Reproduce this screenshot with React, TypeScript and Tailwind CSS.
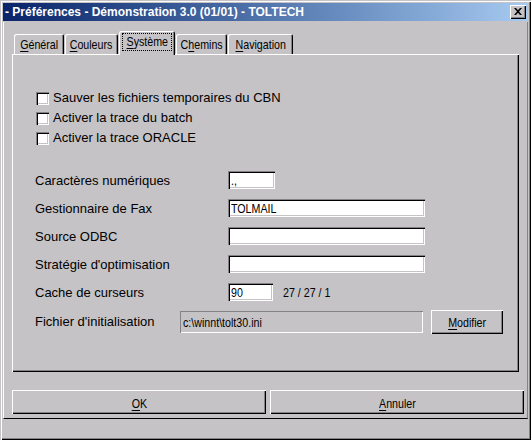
import React from "react";

const raised =
  "shadow-[inset_1px_1px_0_#ffffff,inset_-1px_-1px_0_#000000,inset_-2px_-2px_0_#848284]";
const sunken =
  "shadow-[inset_1px_1px_0_#848284,inset_2px_2px_0_#000000,inset_-1px_-1px_0_#ffffff,inset_-2px_-2px_0_#c6c3c6]";

function N({ children, left }: { children: React.ReactNode; left?: boolean }) {
  return (
    <span
      className={`inline-block whitespace-nowrap scale-x-[0.82] ${left ? "origin-left" : "origin-center"}`}
    >
      {children}
    </span>
  );
}

function Tab({
  label,
  u,
  w,
  selected,
}: {
  label: string;
  u: number;
  w: number;
  selected?: boolean;
}) {
  const before = label.slice(0, u);
  const ch = label.slice(u, u + 1);
  const after = label.slice(u + 1);
  const text = (
    <N>
      {before}
      <u className="underline-offset-[2px]">{ch}</u>
      {after}
    </N>
  );
  if (selected) {
    return (
      <div
        className="relative z-10 -mb-px flex h-[24px] items-start justify-center bg-[#c6c3c6] pt-[2px] rounded-tl-[2px] rounded-tr-[2px] shadow-[inset_1px_1px_0_#ffffff,inset_-1px_0_0_#000000,inset_-2px_0_0_#848284]"
        style={{ width: w }}
      >
        <span className="flex w-[50px] justify-center border border-dotted border-black leading-[16px]">
          {text}
        </span>
      </div>
    );
  }
  return (
    <div
      className="flex h-[20px] items-start justify-center pt-[3px] leading-[15px] rounded-tl-[2px] rounded-tr-[2px] shadow-[inset_1px_1px_0_#ffffff,inset_-1px_0_0_#000000,inset_-2px_0_0_#848284]"
      style={{ width: w }}
    >
      {text}
    </div>
  );
}

function Check({ label }: { label: string }) {
  return (
    <div className="flex h-[20px] items-center">
      <div className={`ml-[1px] h-[13px] w-[13px] bg-white ${sunken}`} />
      <span className="ml-[4px]">{label}</span>
    </div>
  );
}

function Field({ w, value }: { w: number; value?: string }) {
  return (
    <div
      className={`flex h-[18px] items-center overflow-hidden bg-white pl-[3px] pt-[1px] text-[13px] text-black ${sunken}`}
      style={{ width: w }}
    >
      {value ? <N left>{value}</N> : null}
    </div>
  );
}

function Row({ label, children }: { label: string; children?: React.ReactNode }) {
  return (
    <div className="flex h-[28px] items-center">
      <div className="w-[193px] shrink-0 pt-[2px]">{label}</div>
      {children}
    </div>
  );
}

export default function App() {
  return (
    <div
      className="flex h-[440px] w-[531px] flex-col bg-[#c6c3c6] p-[3px] text-black shadow-[inset_1px_1px_0_#c6c3c6,inset_2px_2px_0_#ffffff,inset_-1px_-1px_0_#000000,inset_-2px_-2px_0_#848284] font-['Liberation_Sans',Arial,sans-serif] text-[13px]"
    >
      {/* Title bar */}
      <div className="flex h-[18px] shrink-0 items-center justify-between bg-gradient-to-r from-[#0a246a] to-[#a6caf0] pl-[2px] pr-[2px]">
        <span className="text-[12px] font-bold leading-none text-white whitespace-nowrap">
          - Préférences - Démonstration 3.0 (01/01) - TOLTECH
        </span>
        <div className={`flex h-[14px] w-[16px] items-center justify-center bg-[#c6c3c6] ${raised}`}>
          <svg width="8" height="7" viewBox="0 0 8 7" className="-mt-px -ml-px">
            <path d="M0 0h2l2 2.3L6 0h2L5 3.5 8 7H6L4 4.7 2 7H0l3-3.5z" fill="#000" />
          </svg>
        </div>
      </div>

      {/* Frame */}
      <div className="mt-[1px] flex h-[397px] w-[525px] shrink-0 flex-col border-l border-b border-r border-l-white border-b-[#000000] border-r-[#848284] pl-[8px] pt-[10px]">
        {/* Tabs */}
        <div className="flex h-[22px] items-end gap-[1px] pl-[2px] text-[13px]">
          <Tab label="Général" u={0} w={50} />
          <Tab label="Couleurs" u={0} w={53} />
          <Tab label="Système" u={0} w={56} selected />
          <Tab label="Chemins" u={1} w={51} />
          <Tab label="Navigation" u={0} w={65} />
        </div>

        {/* Panel */}
        <div className="flex h-[318px] w-[507px] flex-col pl-[23px] pt-[34px] shadow-[inset_1px_1px_0_#ffffff,inset_-1px_-1px_0_#000000,inset_-2px_-2px_0_#848284]">
          <Check label="Sauver les fichiers temporaires du CBN" />
          <Check label="Activer la trace du batch" />
          <Check label="Activer la trace ORACLE" />

          <div className="mt-[18px] flex flex-col">
            <Row label="Caractères numériques">
              <Field w={47} value=".," />
            </Row>
            <Row label="Gestionnaire de Fax">
              <Field w={197} value="TOLMAIL" />
            </Row>
            <Row label="Source ODBC">
              <Field w={197} />
            </Row>
            <Row label="Stratégie d'optimisation">
              <Field w={197} />
            </Row>
            <Row label="Cache de curseurs">
              <Field w={45} value="90" />
              <span className="ml-[10px] pt-[2px] text-[13px]">
                <N left>27 / 27 / 1</N>
              </span>
            </Row>
            <div className="mt-[2px] flex h-[28px] items-center">
              <div className="w-[145px] shrink-0">Fichier d'initialisation</div>
              <div className="flex h-[22px] w-[243px] items-center pl-[3px] pt-[2px] text-[13px] shadow-[inset_1px_1px_0_#848284,inset_-1px_-1px_0_#ffffff]">
                <N left>c:\winnt\tolt30.ini</N>
              </div>
              <div
                className={`ml-[8px] flex h-[24px] w-[72px] items-center justify-center pt-[1px] text-[13px] ${raised}`}
              >
                <N>
                  <u className="underline-offset-[2px]">M</u>odifier
                </N>
              </div>
            </div>
          </div>
        </div>

        {/* Buttons */}
        <div className="mt-[18px] flex h-[24px] gap-[4px] text-[13px]">
          <div className={`flex w-[254px] items-center justify-center pt-[3px] ${raised}`}>
            <N>
              <u className="underline-offset-[2px]">O</u>K
            </N>
          </div>
          <div className={`flex w-[254px] items-center justify-center pt-[3px] ${raised}`}>
            <N>
              <u className="underline-offset-[2px]">A</u>nnuler
            </N>
          </div>
        </div>
      </div>
    </div>
  );
}
